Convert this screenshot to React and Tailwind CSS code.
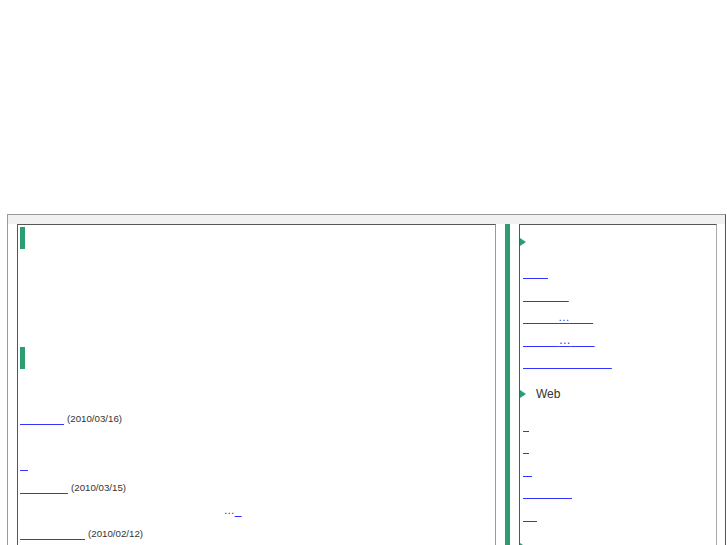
import React from 'react';

const LINK = 'underline decoration-[#3333ff] decoration-1 underline-offset-[2px] text-transparent leading-none';

const categories = [
  { text: '日記', size: 'text-[12.5px]' },
  { text: 'お知らせ', size: 'text-[11.5px]' },
  { pre: 'ソフト', post: '紹介', size: 'text-[11.7px]' },
  { pre: 'ゲーム', post: '攻略', size: 'text-[12px]' },
  { text: 'プログラミング', size: 'text-[12.7px]' },
];

const webLinks = [
  { text: '窓', size: 'text-[6px]' },
  { text: '森', size: 'text-[6px]' },
  { text: '箱', size: 'text-[9px]' },
  { text: '技術情報', size: 'text-[12.25px]' },
  { text: '庭', size: 'text-[14px]' },
];

const Triangle = () => (
  <span className="inline-block h-0 w-0 border-y-[4px] border-l-[6px] border-y-transparent border-l-[#2a9d72]" />
);

const SideSection = ({ title, visible, items, first }) => (
  <div className={first ? '' : 'mt-[10px]'}>
    <div className="flex h-[21px] items-center">
      <Triangle />
      <span className={`ml-[10px] text-[12px] ${visible ? 'text-[#333]' : 'text-transparent'}`}>{title}</span>
    </div>
    <ul className="pt-[9px] pl-[3px] text-[12px] leading-[22.5px]">
      {items.map((it, i) => (
        <li key={i}>
          {it.pre ? (
            <a href="#" className={`underline decoration-[#3333ff] decoration-1 underline-offset-[2px] leading-none text-[#3333ff] ${it.size}`}>
              <span className="text-transparent">{it.pre}</span>…<span className="text-transparent">{it.post}</span>
            </a>
          ) : (
            <a href="#" className={`${LINK} ${it.size}`}>{it.text}</a>
          )}
        </li>
      ))}
    </ul>
  </div>
);

const App = () => {
  return (
    <div className="min-h-[545px] bg-white font-['Liberation_Sans','Noto_Sans_CJK_JP',sans-serif]">
      <div className="h-[214px]">
        <h1 className="px-4 pt-10 text-[20px] text-transparent">ひとりごと日記帳</h1>
      </div>

      <div className="ml-[7px] w-[719px] border-t border-l border-r border-t-[#999] border-l-[#999] border-r-[#555]">
        <div className="h-[9px] bg-[#f1f1f1]" />
        <div className="flex pl-[9px] pr-[8px]">
          {/* main column */}
          <div className="w-[479px] border-t border-l border-r border-t-[#555] border-l-[#555] border-r-[#999] px-[2px] pt-[2px] pb-10">
            <h2 className="h-[22px] border-l-[5px] border-[#2a9d72] pl-2 text-[14px] leading-[22px] text-transparent">お知らせ</h2>
            <p className="mt-[14px] mb-[15px] text-[12px] leading-[23px] text-transparent">
              このブログは日々の出来事を書いています。
              <br />
              ご意見ご感想はお気軽にどうぞ。
              <br />
              よろしくお願いします。
            </p>
            <h2 className="h-[22px] border-l-[5px] border-[#2a9d72] pl-2 text-[14px] leading-[22px] text-transparent">最近の記事</h2>

            <div className="mt-[38px] text-[11px] leading-[23px] text-[#333]">
              <div>
                <a href="#" className={`${LINK} text-[11px]`}>春の便り</a>{' '}
                <span className="text-[9.7px]">(2010/03/16)</span>
              </div>
              <div className="text-[12px] text-transparent">桜の季節がやってきました。</div>
              <div>
                <a href="#" className={`${LINK} text-[8px]`}>続</a>
              </div>
              <div>
                <a href="#" className={`${LINK} text-[12px]`}>新年度へ</a>{' '}
                <span className="text-[9.7px]">(2010/03/15)</span>
              </div>
              <div>
                <span className="text-[12px] text-transparent">引っ越しの準備で忙しい毎日が続いて</span>…<a href="#" className={`${LINK} text-[7px]`}>続</a>
              </div>
              <div>
                <a href="#" className={`${LINK} text-[13px]`}>雪の日の話</a>{' '}
                <span className="text-[9.7px]">(2010/02/12)</span>
              </div>
              <div className="text-[12px] text-transparent">久しぶりに大雪が降りました。</div>
              <div>
                <a href="#" className={`${LINK} text-[11px]`}>近況報告</a>{' '}
                <span className="text-[9.7px]">(2010/01/20)</span>
              </div>
            </div>
          </div>

          <div className="w-[9px] shrink-0" />
          <div className="w-[5px] shrink-0 bg-[#2a9d72]" />
          <div className="w-[9px] shrink-0" />

          {/* side column */}
          <div className="w-[198px] border-t border-l border-r border-t-[#555] border-l-[#555] border-r-[#aaa] pt-[6px] pb-10">
            <SideSection first title="カテゴリ" items={categories} />
            <SideSection visible title="Web" items={webLinks} />
            <SideSection title="リンク" items={categories.slice(0, 2)} />
          </div>
        </div>
      </div>
    </div>
  );
};

export default App;
